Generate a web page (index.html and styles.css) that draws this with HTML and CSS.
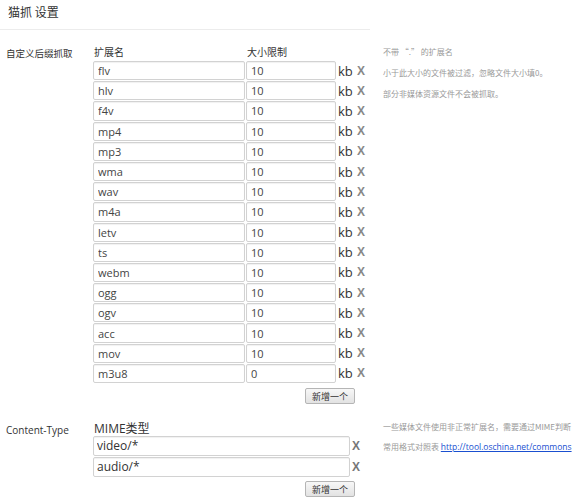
FILE: index.html
```html
<!DOCTYPE html>
<html>
<head>
<meta charset="utf-8">
<link rel="stylesheet" href="styles.css">
</head>
<body>
<div class="page">
  <h1 class="title">猫抓 设置</h1>

  <div class="section sec-ext">
    <div class="label">自定义后缀抓取</div>
    <div class="main">
      <div class="head">
        <span class="h-ext">扩展名</span>
        <span class="h-size">大小限制</span>
      </div>
      <div class="row"><input class="ext" value="flv"><input class="size" value="10"><span class="kb">kb</span><span class="x">X</span></div>
      <div class="row"><input class="ext" value="hlv"><input class="size" value="10"><span class="kb">kb</span><span class="x">X</span></div>
      <div class="row"><input class="ext" value="f4v"><input class="size" value="10"><span class="kb">kb</span><span class="x">X</span></div>
      <div class="row"><input class="ext" value="mp4"><input class="size" value="10"><span class="kb">kb</span><span class="x">X</span></div>
      <div class="row"><input class="ext" value="mp3"><input class="size" value="10"><span class="kb">kb</span><span class="x">X</span></div>
      <div class="row"><input class="ext" value="wma"><input class="size" value="10"><span class="kb">kb</span><span class="x">X</span></div>
      <div class="row"><input class="ext" value="wav"><input class="size" value="10"><span class="kb">kb</span><span class="x">X</span></div>
      <div class="row"><input class="ext" value="m4a"><input class="size" value="10"><span class="kb">kb</span><span class="x">X</span></div>
      <div class="row"><input class="ext" value="letv"><input class="size" value="10"><span class="kb">kb</span><span class="x">X</span></div>
      <div class="row"><input class="ext" value="ts"><input class="size" value="10"><span class="kb">kb</span><span class="x">X</span></div>
      <div class="row"><input class="ext" value="webm"><input class="size" value="10"><span class="kb">kb</span><span class="x">X</span></div>
      <div class="row"><input class="ext" value="ogg"><input class="size" value="10"><span class="kb">kb</span><span class="x">X</span></div>
      <div class="row"><input class="ext" value="ogv"><input class="size" value="10"><span class="kb">kb</span><span class="x">X</span></div>
      <div class="row"><input class="ext" value="acc"><input class="size" value="10"><span class="kb">kb</span><span class="x">X</span></div>
      <div class="row"><input class="ext" value="mov"><input class="size" value="10"><span class="kb">kb</span><span class="x">X</span></div>
      <div class="row"><input class="ext" value="m3u8"><input class="size" value="0"><span class="kb">kb</span><span class="x">X</span></div>
      <div class="btn-line btn-ext"><button class="btn">新增一个</button></div>
    </div>
    <div class="notes">
      <p>不带 “.” 的扩展名</p>
      <p>小于此大小的文件被过滤，忽略文件大小填0。</p>
      <p>部分非媒体资源文件不会被抓取。</p>
    </div>
  </div>

  <div class="section sec-mime">
    <div class="label label-ct">Content-Type</div>
    <div class="main">
      <div class="head-mime">MIME类型</div>
      <div class="row mrow"><input class="mime" value="video/*"><span class="x mx">X</span></div>
      <div class="row mrow"><input class="mime" value="audio/*"><span class="x mx">X</span></div>
      <div class="btn-line btn-mime"><button class="btn">新增一个</button></div>
    </div>
    <div class="notes notes-mime">
      <p>一些媒体文件使用非正常扩展名，需要通过MIME判断</p>
      <p>常用格式对照表 <a href="#">http://tool.oschina.net/commons</a></p>
    </div>
  </div>
</div>
</body>
</html>
```

FILE: styles.css
```css
* { box-sizing: border-box; }
html, body { margin: 0; padding: 0; background: #fff; overflow: hidden; }
body {
  font-family: "Open Sans", "Noto Sans CJK SC", sans-serif;
  color: #333;
  font-size: 12px;
}
.page { width: 582px; }
.title {
  margin: 0;
  font-size: 12px;
  font-weight: normal;
  line-height: 16px;
  padding: 4px 0 9px 8px;
  width: 370px;
  border-bottom: 1px solid #ececec;
  color: #333;
  font-family: "Noto Sans CJK SC", sans-serif;
}
.section {
  display: flex;
  align-items: flex-start;
}
.sec-ext { margin-top: 15px; }
.label {
  flex-shrink: 0;
  width: 93px;
  padding-left: 6px;
  font-size: 9.5px;
  line-height: 14px;
  padding-top: 1px;
  color: #333;
  font-family: "Noto Sans CJK SC", sans-serif;
}
.main { display: flex; flex-direction: column; flex-shrink: 0; width: 290px; }
.head {
  display: flex;
  font-size: 10px;
  line-height: 14px;
  padding-left: 1px;
  height: 16px;
  color: #333;
  font-family: "Noto Sans CJK SC", sans-serif;
}
.h-ext { width: 153px; }
.row {
  display: flex;
  align-items: center;
  height: 19.2px;
  margin-bottom: 1px;
}
input {
  font-family: "Open Sans", "Noto Sans CJK SC", sans-serif;
  font-size: 11px;
  color: #444;
  height: 19.2px;
  border: 1px solid #d2d2d2;
  border-radius: 2px;
  box-shadow: inset 0 1px 1px rgba(0,0,0,0.06);
  padding: 0 4px;
  margin: 0;
  background: #fff;
  outline: none;
}
input.ext { width: 152px; }
input.size { width: 90px; margin-left: 1px; }
.kb {
  font-size: 13px;
  color: #333;
  margin-left: 2px;
  width: 18px;
  line-height: 16px;
}
.x {
  font-family: "Liberation Sans", sans-serif;
  font-size: 12px;
  font-weight: bold;
  color: #888;
  margin-left: 1px;
  line-height: 16px;
}
.btn-line { display: flex; justify-content: flex-end; }
.btn-ext { width: 262px; margin-top: 4px; }
.btn {
  font-family: "Noto Sans CJK SC", sans-serif;
  font-size: 9px;
  color: #333;
  height: 16px;
  padding: 0 6px;
  line-height: 13px;
  border: 1px solid #b5b5b5;
  border-radius: 2px;
  background: linear-gradient(#f7f7f7, #e2e2e2);
}
.notes {
  flex-shrink: 0;
  white-space: nowrap;
  font-size: 8px;
  color: #999;
  font-family: "Noto Sans CJK SC", sans-serif;
}
.sec-ext .notes { margin-top: 1px; }
.notes p { margin: 0 0 10px 0; line-height: 11px; }
.sec-mime { margin-top: 17px; }
.label-ct {
  font-family: "Open Sans", sans-serif;
  font-size: 10px;
  padding-top: 2px;
  color: #333;
}
.head-mime {
  font-size: 12px;
  line-height: 16px;
  padding-left: 1px;
  height: 15px;
  color: #333;
}
.mrow { height: 19.5px; margin-bottom: 1.5px; }
input.mime {
  width: 257px;
  font-size: 12px;
  color: #333;
  height: 19.5px;
  padding: 0 3px;
}
.mx { color: #777; margin-left: 2px; font-size: 12px; }
.btn-mime { width: 262px; margin-top: 3px; }
.notes-mime p { margin: 0 0 9px 0; }
.notes a { color: #1a4fd0; text-decoration: underline; font-family: "Open Sans", sans-serif; font-size: 8.5px; }
```
